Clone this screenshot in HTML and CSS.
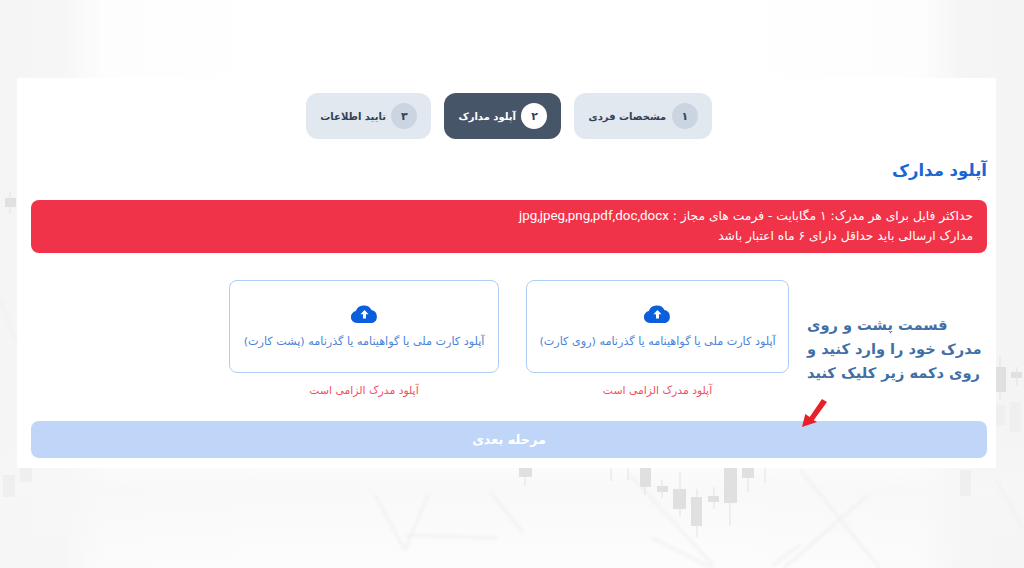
FILE: index.html
```html
<!DOCTYPE html>
<html lang="fa" dir="rtl">
<head>
<meta charset="utf-8">
<title>آپلود مدارک</title>
<link rel="stylesheet" href="styles.css">
</head>
<body>
<svg class="backdrop" viewBox="0 0 1024 568" aria-hidden="true">
  <g class="bg-lines">
    <path d="M375 495 L405 550 M428 495 L405 550 M405 535 L497 538 M490 492 L523 532 M630 475 L713 565 M652 538 L712 568 M868 495 L784 568 M773 565 L800 545 M800 470 L880 568 M0 300 L16 340 M996 480 L1024 530"/>
  </g>
  <g class="bg-candles-faint">
    <rect x="3" y="475" width="12" height="22"/>
    <rect x="20" y="468" width="12" height="14"/>
    <rect x="1010" y="402" width="11" height="30"/>
    <rect x="996" y="405" width="9" height="20"/>
    <rect x="960" y="470" width="11" height="26"/>
  </g>
  <g class="bg-candles">
    <rect x="5" y="198" width="11" height="9"/>
    <rect x="519" y="468" width="13" height="9"/>
    <rect x="640" y="468" width="11" height="19"/>
    <rect x="657" y="486" width="11" height="6"/>
    <rect x="673" y="489" width="13" height="20"/>
    <rect x="691" y="497" width="11" height="29"/>
    <rect x="708" y="496" width="11" height="6"/>
    <rect x="724" y="468" width="13" height="35"/>
    <rect x="742" y="468" width="12" height="10"/>
    <rect x="996" y="367" width="10" height="25"/>
    <rect x="1011" y="372" width="11" height="6"/>
    <path class="wick" d="M10 192V214M525 477V486M611 468V481M628 468V480M645 487V495M662 480V498M680 472V516M697 489V537M714 487V509M730 503V526M748 478V492M765 468V483M1000 356V400M1017 367V386"/>
  </g>
</svg>
<main class="card">
  <ol class="steps">
    <li class="step"><span class="step-num">۱</span><span>مشخصات فردی</span></li>
    <li class="step step-active"><span class="step-num">۲</span><span>آپلود مدارک</span></li>
    <li class="step"><span class="step-num">۳</span><span>تایید اطلاعات</span></li>
  </ol>
  <h1 class="title">آپلود مدارک</h1>
  <div class="alert">
    <p>حداکثر فایل برای هر مدرک: ۱ مگابایت - فرمت های مجاز : <span class="latin">jpg,jpeg,png,pdf,doc,docx</span></p>
    <p>مدارک ارسالی باید حداقل دارای ۶ ماه اعتبار باشد</p>
  </div>
  <div class="uploads">
    <div class="upload upload-front">
      <div class="dropzone">
        <svg class="cloud" viewBox="0 0 27 19"><path d="M6 19A6 6 0 0 1 4.800 7.100A8.500 8 0 0 1 20.500 6A6.800 6.800 0 0 1 21.500 19Z"/><path class="arrow-up" d="M13.500 6l4 4.300h-2.500v4.200h-3v-4.200h-2.500Z"/></svg>
        <span>آپلود کارت ملی یا گواهینامه یا گذرنامه (روی کارت)</span>
      </div>
      <p class="error">آپلود مدرک الزامی است</p>
    </div>
    <div class="upload upload-back">
      <div class="dropzone">
        <svg class="cloud" viewBox="0 0 27 19"><path d="M6 19A6 6 0 0 1 4.800 7.100A8.500 8 0 0 1 20.500 6A6.800 6.800 0 0 1 21.500 19Z"/><path class="arrow-up" d="M13.500 6l4 4.300h-2.500v4.200h-3v-4.200h-2.500Z"/></svg>
        <span>آپلود کارت ملی یا گواهینامه یا گذرنامه (پشت کارت)</span>
      </div>
      <p class="error">آپلود مدرک الزامی است</p>
    </div>
  </div>
  <button class="next" type="button">مرحله بعدی</button>
  <p class="note">قسمت پشت و روی<br>مدرک خود را وارد کنید و<br>روی دکمه زیر کلیک کنید</p>
  <svg class="pointer" viewBox="0 0 28 32"><path d="M2 29L5.300 16L9.700 19L22 1L27 4L13.700 22.300L17 24Z"/></svg>
</main>
</body>
</html>
```
FILE: styles.css
```css
* { box-sizing: border-box; }
html, body { margin: 0; height: 100%; }
body {
  position: relative;
  height: 568px;
  overflow: hidden;
  padding: 78px 28px 0 17px;
  background:
    linear-gradient(180deg, rgba(247,247,247,0) 78%, rgba(247,247,247,.8) 86%, rgba(247,247,247,.3) 100%),
    linear-gradient(90deg, #f5f5f5 0, #f6f6f6 6%, #fdfdfd 10%, #fff 27%, #fff 70%, #fdfdfd 90%, #f5f5f5 94%, #f4f4f4 100%);
  font-family: "DejaVu Sans", "Noto Sans", sans-serif;
}
.backdrop { position: absolute; inset: 0; width: 1024px; height: 568px; }
.bg-lines { filter: blur(1.500px); }
.bg-lines path { fill: none; stroke: #f1f1f1; stroke-width: 2.500; }
.bg-candles { filter: blur(.4px); }
.bg-candles rect { fill: #e0e0e0; }
.bg-candles .wick { fill: none; stroke: #e2e2e2; stroke-width: 1; }
.bg-candles-faint { filter: blur(.6px); }
.bg-candles-faint rect { fill: #efefef; }
.card {
  position: relative;
  width: 979px;
  height: 390px;
  padding: 15px 9px 0 14px;
  background: #fff;
}
.steps {
  display: flex;
  justify-content: center;
  gap: 13px;
  margin: 0;
  padding: 0;
  list-style: none;
}
.step {
  display: flex;
  align-items: center;
  gap: 5.500px;
  height: 46px;
  padding: 0 14px;
  border-radius: 12px;
  background: #e2e8f0;
  color: #334155;
  font-size: 10px;
  font-weight: 700;
  white-space: nowrap;
}
.step-active { background: #475569; color: #fff; }
.step-num {
  display: flex;
  align-items: center;
  justify-content: center;
  width: 26px;
  height: 26px;
  border-radius: 50%;
  background: #cbd5e1;
  font-size: 11px;
}
.step-active .step-num { background: #fff; color: #334155; }
.title {
  margin: 20px 0 0;
  height: 41px;
  color: #1a66d4;
  font-size: 16.500px;
  font-weight: 700;
  line-height: 24px;
}
.alert {
  height: 53px;
  padding: 6px 14px;
  border-radius: 8px;
  background: #f03349;
  color: #fff;
  font-size: 12.300px;
  line-height: 20px;
}
.alert p { margin: 0; }
.latin { font-family: Roboto, sans-serif; font-size: 13.400px; }
.uploads {
  display: flex;
  gap: 27px;
  margin-top: 27px;
  padding-right: 198px;
}
.upload-front { width: 263px; }
.upload-back { width: 270px; }
.dropzone {
  display: flex;
  flex-direction: column;
  align-items: center;
  gap: 12px;
  height: 93px;
  padding-top: 23px;
  border: 1px solid #aecdf7;
  border-radius: 8px;
  color: #4a83d8;
  font-size: 11.200px;
  white-space: nowrap;
}
.cloud { width: 27px; height: 19px; fill: #0b5fdc; }
.arrow-up { fill: #fff; }
.error {
  margin: 11px 0 0;
  height: 37px;
  color: #f0505f;
  font-size: 10.800px;
  line-height: 14px;
  text-align: center;
}
.next {
  display: block;
  width: 100%;
  height: 37px;
  padding-bottom: 2px;
  border: 0;
  border-radius: 8px;
  background: #bfd6f9;
  color: #fff;
  font-family: inherit;
  font-size: 12.800px;
  font-weight: 700;
}
.note {
  position: absolute;
  top: 235px;
  left: 790px;
  margin: 0;
  color: #3f6fa5;
  font-size: 14.600px;
  font-weight: 700;
  line-height: 24px;
  text-align: left;
  white-space: nowrap;
}
.pointer {
  position: absolute;
  top: 320px;
  left: 783px;
  width: 28px;
  height: 32px;
  fill: #e8202a;
}
```
